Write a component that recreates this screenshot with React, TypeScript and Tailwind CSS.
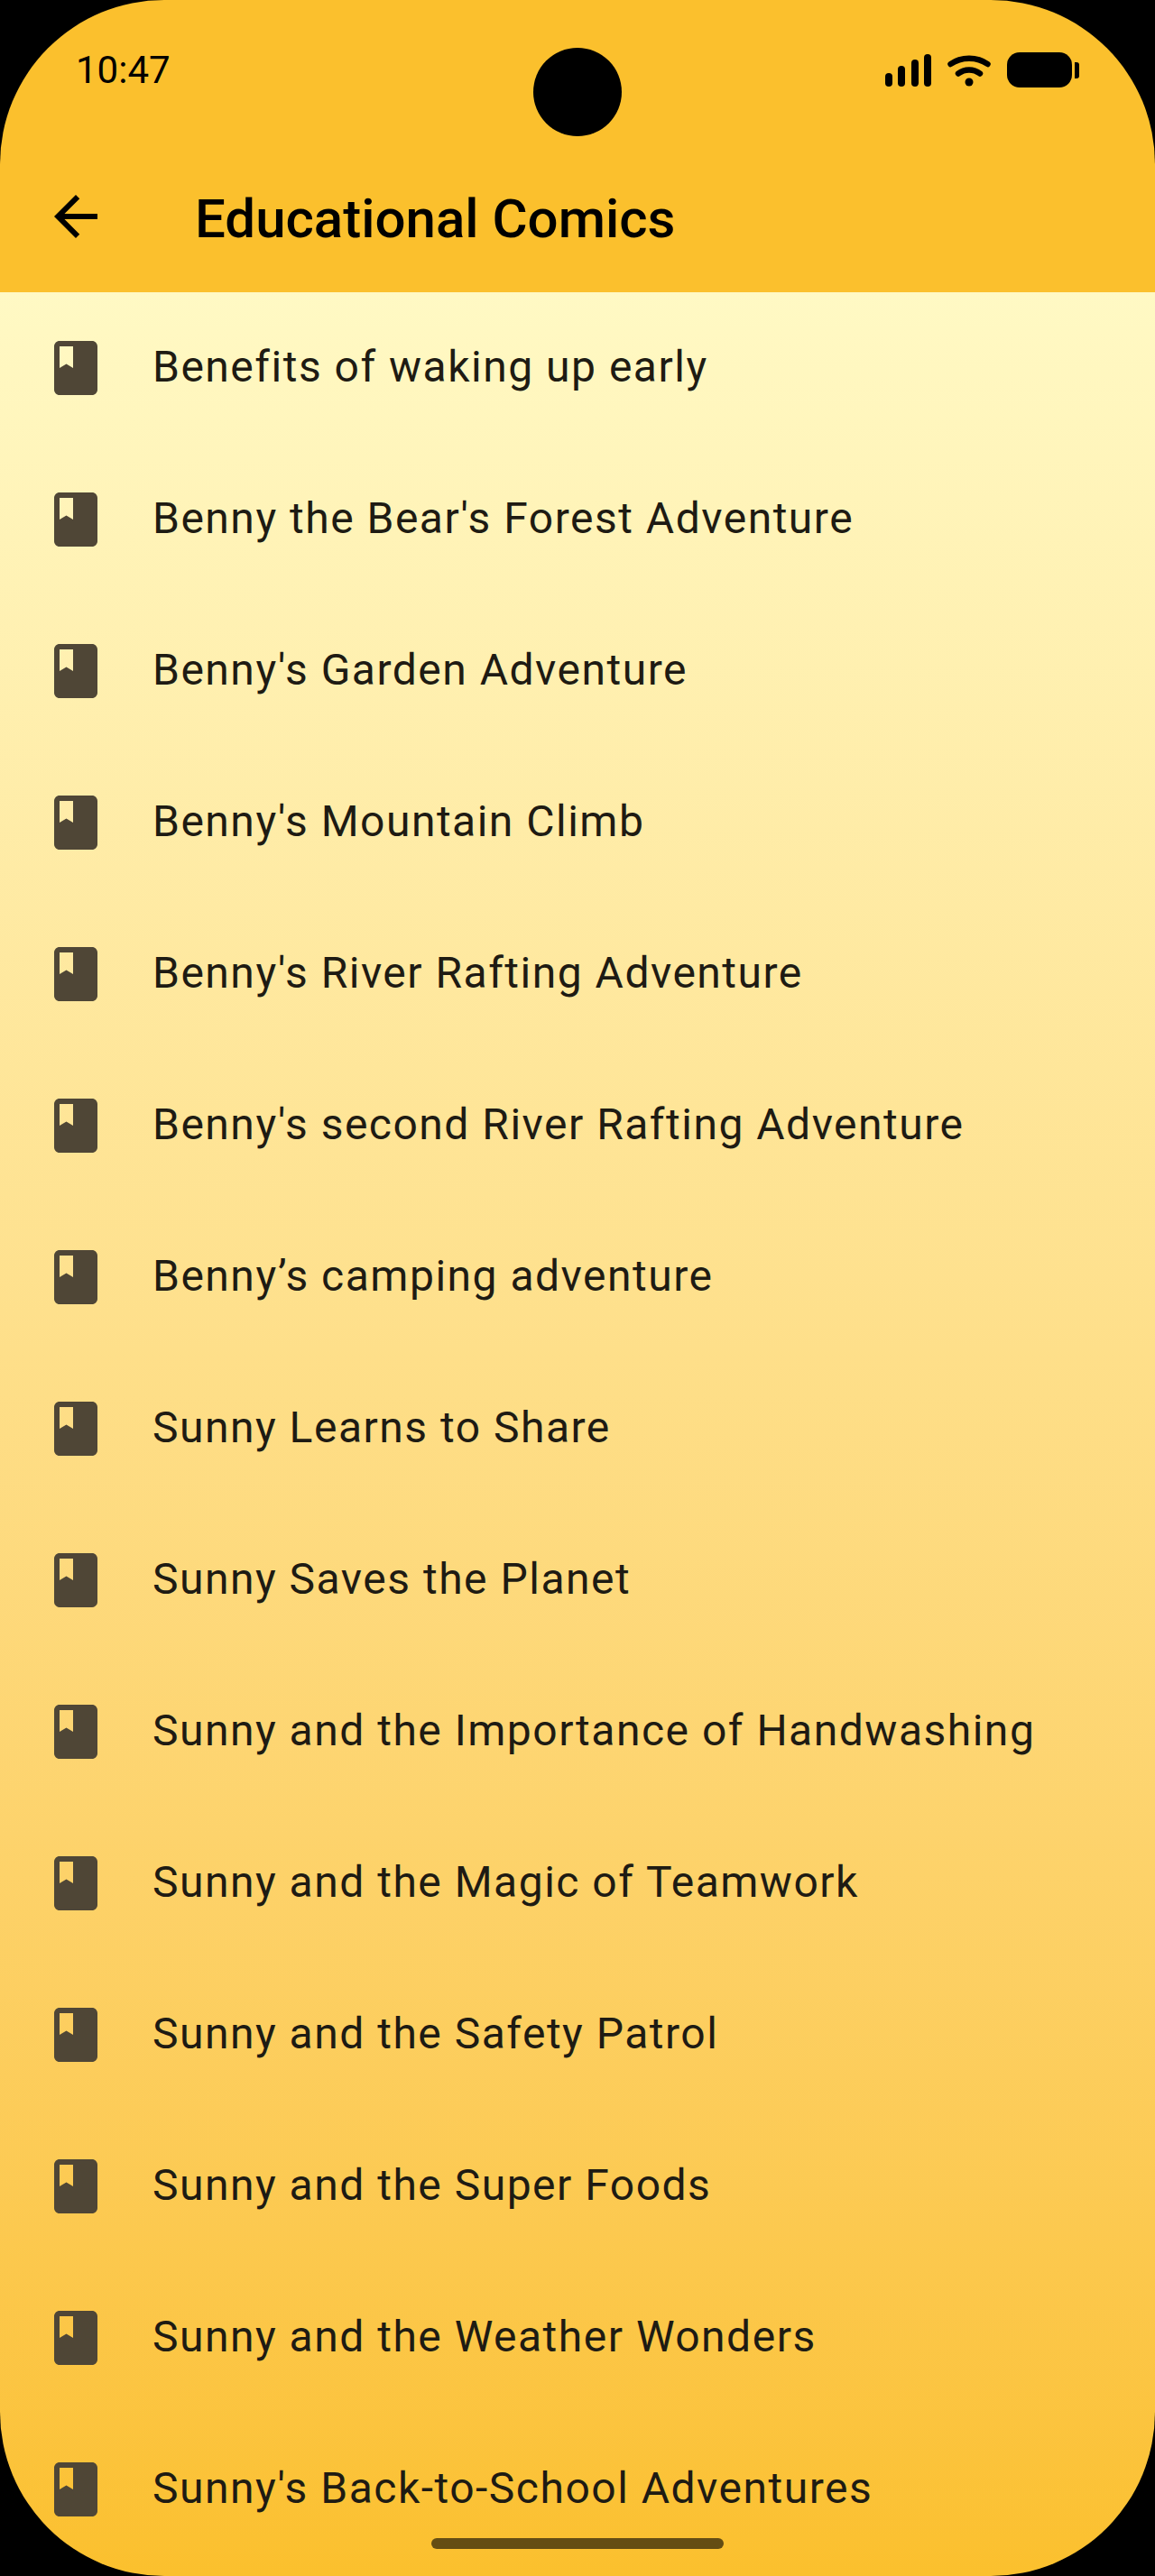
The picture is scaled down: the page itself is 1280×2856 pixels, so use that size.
const comics = [
  "Benefits of waking up early",
  "Benny the Bear's Forest Adventure",
  "Benny's Garden Adventure",
  "Benny's Mountain Climb",
  "Benny's River Rafting Adventure",
  "Benny's second River Rafting Adventure",
  "Benny’s camping adventure",
  "Sunny Learns to Share",
  "Sunny Saves the Planet",
  "Sunny and the Importance of Handwashing",
  "Sunny and the Magic of Teamwork",
  "Sunny and the Safety Patrol",
  "Sunny and the Super Foods",
  "Sunny and the Weather Wonders",
  "Sunny's Back-to-School Adventures",
];

const BookIcon = () => (
  <svg viewBox="0 0 24 24" className="w-[72px] h-[72px] shrink-0 fill-[#4f4636]">
    <path
      fillRule="evenodd"
      d="M18 2H6c-1.1 0-2 .9-2 2v16c0 1.1.9 2 2 2h12c1.1 0 2-.9 2-2V4c0-1.1-.9-2-2-2zM6 4h5v8l-2.5-1.5L6 12V4z"
    />
  </svg>
);

const StatusIcons = () => (
  <div className="flex items-start">
    <div className="flex items-end gap-[6.5px] h-[36px] mt-[2px]">
      <div className="w-[8px] h-[15px] rounded-full bg-black" />
      <div className="w-[8px] h-[23px] rounded-full bg-black" />
      <div className="w-[8px] h-[30px] rounded-full bg-black" />
      <div className="w-[8px] h-[36px] rounded-full bg-black" />
    </div>
    <svg viewBox="0 0 48 36" className="w-[48px] h-[36px] ml-[18px] mt-[2px]">
      <path d="M3.5 11C15 2.500 33 2.500 44.500 11" fill="none" stroke="#000" strokeWidth="6.500" strokeLinecap="round" />
      <path d="M12 21.500C19 16 29 16 36 21.500" fill="none" stroke="#000" strokeWidth="6.500" strokeLinecap="round" />
      <circle cx="24" cy="31" r="4.500" fill="#000" />
    </svg>
    <div className="flex items-center ml-[18px]">
      <div className="w-[72px] h-[39px] rounded-[14px] bg-black" />
      <div className="w-[5px] h-[18px] ml-[3px] rounded-r-[3px] bg-black" />
    </div>
  </div>
);

export default function App() {
  return (
    <div className="bg-black w-[1280px] h-[2856px] font-['Roboto',sans-serif]">
      <div className="relative flex flex-col h-full rounded-[182px] overflow-hidden">
        <div className="bg-[#fbc02d] h-[324px] shrink-0">
          <div className="flex justify-between h-[156px] pl-[84px] pr-[84px] pt-[58px]">
            <span className="text-[42px] leading-[40px] text-black">10:47</span>
            <StatusIcons />
          </div>
          <div className="flex items-center h-[168px] pl-[48px]">
            <svg viewBox="0 0 24 24" className="w-[72px] h-[72px] fill-black">
              <path d="M20 11H7.830l5.590-5.590L12 4l-8 8 8 8 1.410-1.410L7.830 13H20v-2z" />
            </svg>
            <h1 className="ml-[96px] mt-[6px] text-[60px] font-medium text-black">Educational Comics</h1>
          </div>
        </div>
        <div className="flex flex-col flex-1 min-h-0 bg-gradient-to-b from-[#fff9c4] to-[#fbc02d]">
          {comics.map((title) => (
            <div key={title} className="flex items-center gap-[49px] h-[168px] shrink-0 pl-[48px]">
              <BookIcon />
              <span className="mb-[3px] text-[48px] tracking-[1.5px] text-[#1e1b13]">{title}</span>
            </div>
          ))}
        </div>
        <div className="absolute left-[591px] top-[53px] w-[98px] h-[98px] rounded-full bg-black" />
        <div className="absolute left-[478px] top-[2814px] w-[324px] h-[12px] rounded-full bg-black/60" />
      </div>
    </div>
  );
}
